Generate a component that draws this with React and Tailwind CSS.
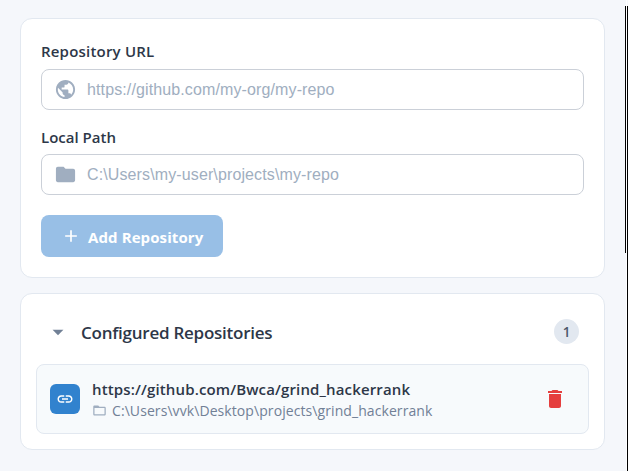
import { MdPublic, MdFolder, MdAdd, MdArrowDropDown, MdLink, MdFolderOpen, MdDelete } from "react-icons/md";

function Field({ label, icon: Icon, placeholder, className, labelClass }) {
  return (
    <label className={`block ${className}`}>
      <span className={`block h-[22px] text-[15px] leading-[22px] font-semibold whitespace-nowrap text-[#2d3748] ${labelClass}`}>{label}</span>
      <span className="mt-[7px] flex h-[41px] items-center rounded-lg border border-[#cbd0d8] bg-white pl-[12px]">
        <Icon className="size-[23px] shrink-0 text-[#a0aec0]" />
        <input
          className="ml-[10px] w-full bg-transparent font-['Liberation_Sans',Arial,sans-serif] text-base tracking-[0.12px] outline-none placeholder:text-[#a0aec0]"
          placeholder={placeholder}
        />
      </span>
    </label>
  );
}

export default function App() {
  return (
    <div className="flex h-[471px] w-[628px] overflow-hidden bg-[#f5f7fb] font-['Open_Sans','Noto_Sans',sans-serif]">
      <main className="w-[625px] shrink-0 pt-[18px] pl-5">
        <section className="h-[260px] w-[585px] rounded-xl border border-[#e2e8f0] bg-white px-5 pt-[21px]">
          <Field label="Repository URL" icon={MdPublic} placeholder="https://github.com/my-org/my-repo" className="" labelClass="tracking-[0.2px]" />
          <Field label="Local Path" icon={MdFolder} placeholder="C:\Users\my-user\projects\my-repo" className="mt-[15px]" labelClass="pt-px" />
          <button className="mt-5 flex h-[42px] w-[182px] items-center rounded-lg bg-[#98bfe6] pl-[20px] text-white">
            <MdAdd className="mb-px size-5 shrink-0" />
            <span className="ml-[7px] pt-[2px] text-[15px] font-bold tracking-[0.1px] whitespace-nowrap">Add Repository</span>
          </button>
        </section>

        <section className="mt-[15px] h-[157px] w-[585px] rounded-xl border border-[#e2e8f0] bg-white px-[15px] pt-[25px]">
          <header className="flex h-[26px] items-center pr-[10px] pl-[9px]">
            <MdArrowDropDown className="size-[26px] text-[#718096]" />
            <h2 className="ml-[10px] pt-px text-[17px] font-semibold tracking-[-0.25px] whitespace-nowrap text-[#2d3748]">Configured Repositories</h2>
            <span className="mb-px ml-auto flex size-[25px] items-center justify-center rounded-full bg-[#e2e8f0] pt-px text-[13.5px] font-semibold text-[#4a5568]">1</span>
          </header>
          <div className="mt-[19px] flex h-[70px] items-center rounded-lg border border-[#e2e8f0] bg-[#f7fafc] pr-[21px] pl-[13px]">
            <span className="flex size-[30px] shrink-0 items-center justify-center rounded-md bg-[#3182ce] text-white">
              <MdLink className="size-[18px]" />
            </span>
            <div className="ml-3">
              <div className="h-[22px] text-[15px] leading-[22px] font-semibold tracking-[0.14px] whitespace-nowrap text-[#2d3748]">https://github.com/Bwca/grind_hackerrank</div>
              <div className="flex h-[20px] items-center text-[14px] leading-[20px] tracking-[0.08px] whitespace-nowrap text-[#718096]">
                <MdFolderOpen className="mr-[5px] size-[15px] text-[#a0aec0]" />
                <span className="pt-px">C:\Users\vvk\Desktop\projects\grind_hackerrank</span>
              </div>
            </div>
            <MdDelete className="ml-auto size-6 shrink-0 text-[#e53e3e]" />
          </div>
        </section>
      </main>
      <div className="mt-[6px] h-[247px] w-px bg-black" />
      <div className="w-px bg-white" />
      <div className="mt-[6px] w-px bg-black" />
    </div>
  );
}
